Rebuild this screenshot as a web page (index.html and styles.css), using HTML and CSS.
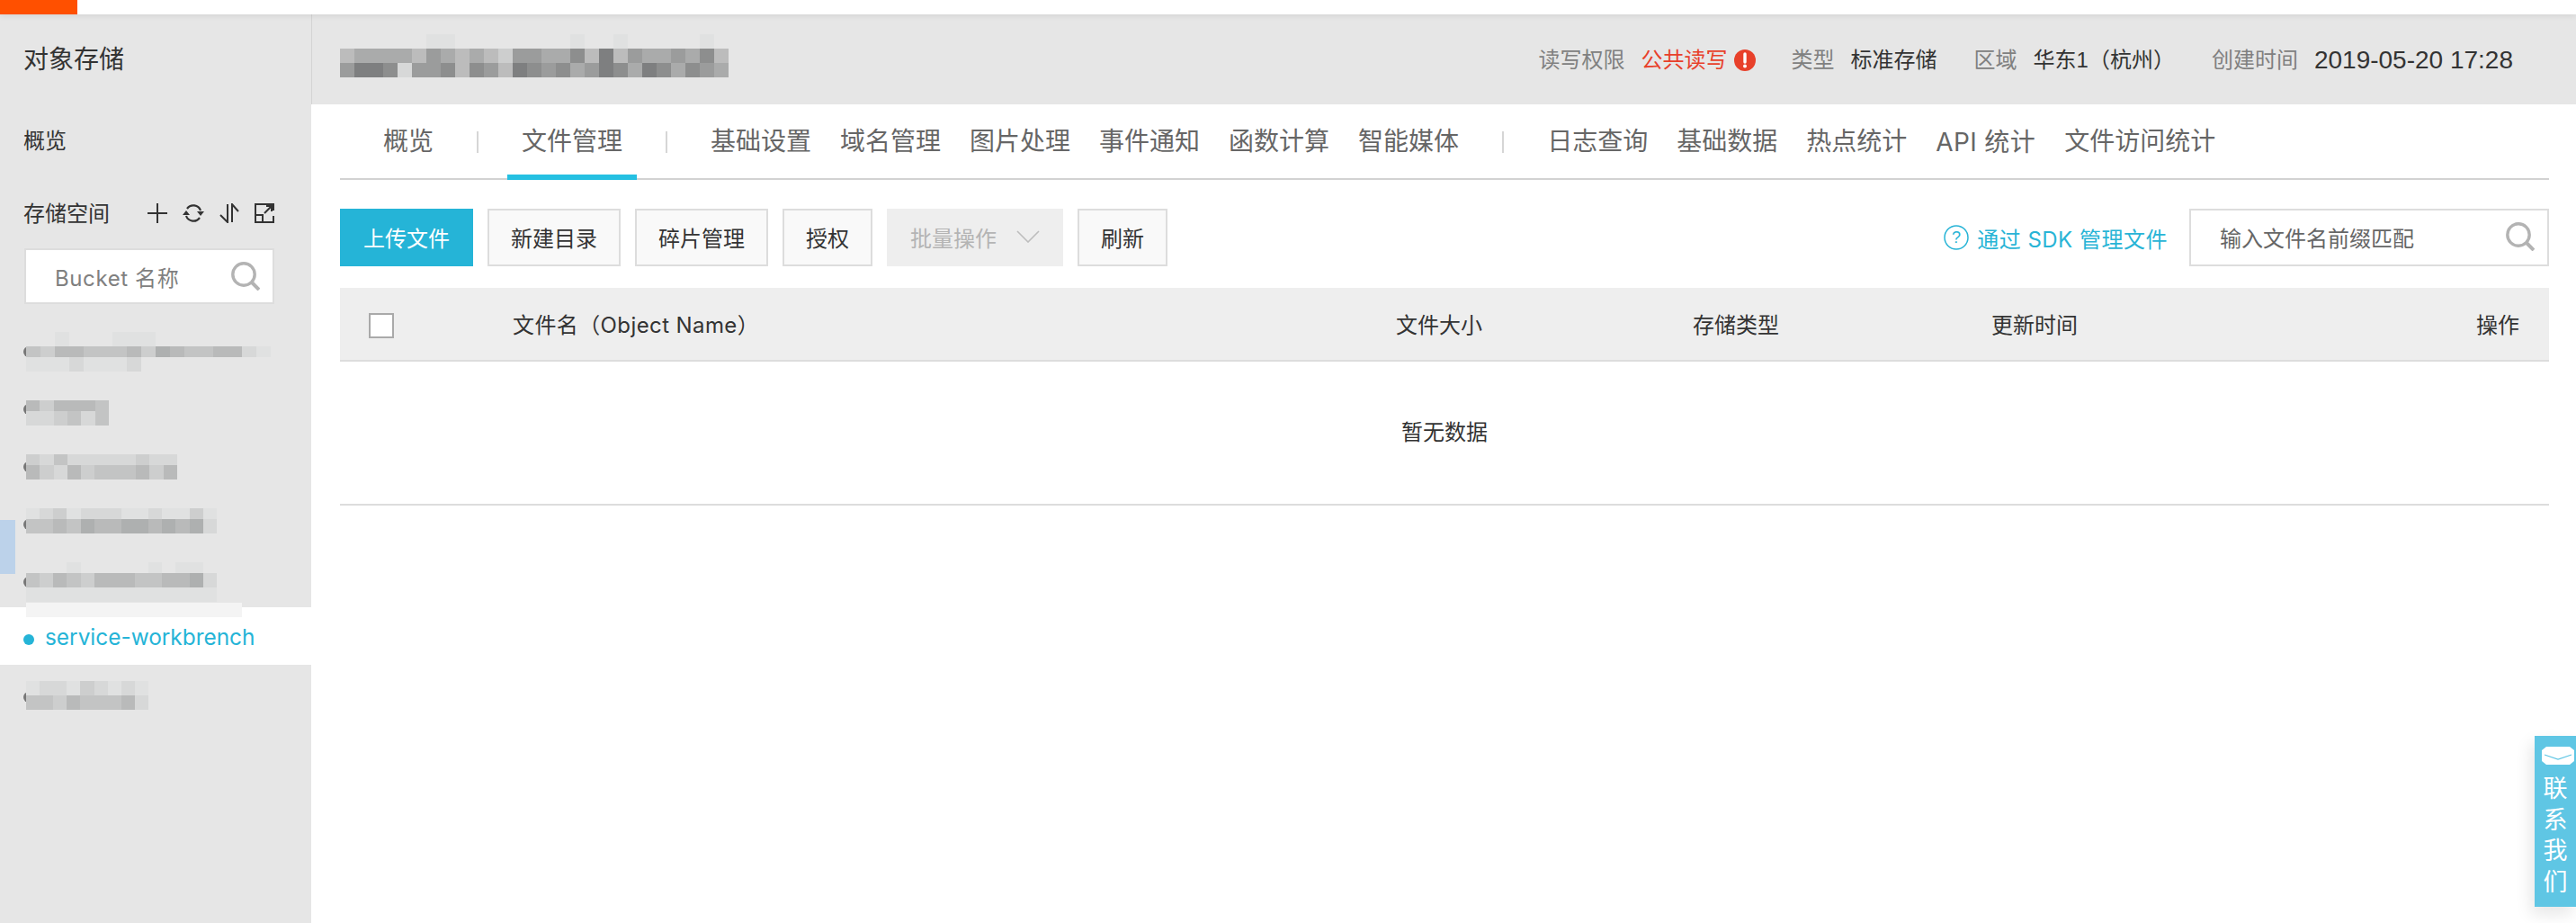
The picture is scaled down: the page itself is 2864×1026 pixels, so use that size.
FILE: index.html
```html
<!DOCTYPE html>
<html lang="zh-CN">
<head>
<meta charset="utf-8">
<title>对象存储</title>
<link rel="stylesheet" href="styles.css">
</head>
<body>
<div class="topbar"><div class="logo"></div></div>
<div class="app">
  <aside class="sidebar">
    <div class="side-title">对象存储</div>
    <div class="side-link">概览</div>
    <div class="side-head">
      <span class="side-head-label">存储空间</span>
      <div class="side-icons">
        <svg class="ico" viewBox="0 0 22 22"><path d="M0 11H22M11 0V22" fill="none" stroke="#333" stroke-width="2"/></svg>
        <svg class="ico" viewBox="0 0 24 22"><path d="M5 6A8.5 8.5 0 0 1 20 8M19 16A8.5 8.5 0 0 1 4 14" fill="none" stroke="#333" stroke-width="2.2"/><path d="M0 13H8L4 8ZM24 9H16L20 14Z" fill="#333"/></svg>
        <svg class="ico" viewBox="0 0 22 22"><path d="M9 1V21L1 13M14 21V1L21 9" fill="none" stroke="#333" stroke-width="2"/></svg>
        <svg class="ico" viewBox="0 0 22 22"><path d="M21 8V1H1V21H21V14M1 13H9V21M11 11L19 3M13 3H19V9" fill="none" stroke="#333" stroke-width="2"/></svg>
      </div>
    </div>
    <div class="side-search">
      <span class="lat bucket-ph">Bucket 名称</span>
      <svg class="search-ico" viewBox="0 0 32 32"><circle cx="14" cy="14" r="12.2" fill="none" stroke="#b3b3b3" stroke-width="3.4"/><path d="M22.5 22.5L31 31" stroke="#b3b3b3" stroke-width="4"/></svg>
    </div>
    <ul class="bucket-list">
      <li class="bucket"><div class="mosaic m-a">
        <i></i><i></i><i class="s1"></i><i></i><i></i><i></i><i class="s1"></i><i class="s1"></i><i class="s1"></i><i></i><i></i><i></i><i></i><i></i><i></i><i></i><i></i>
        <i class="s4"></i><i class="s3"></i><i class="s5"></i><i class="s5"></i><i class="s4"></i><i class="s4"></i><i class="s4"></i><i class="s5"></i><i class="s3"></i><i class="s6"></i><i class="s5"></i><i class="s4"></i><i class="s4"></i><i class="s5"></i><i class="s5"></i><i class="s2"></i><i class="s1"></i>
        <i class="s1"></i><i class="s1"></i><i class="s1"></i><i class="s2"></i><i class="s1"></i><i class="s1"></i><i class="s1"></i><i class="s2"></i><i></i><i></i><i></i><i></i><i></i><i></i><i></i><i></i><i></i>
      </div></li>
      <li class="bucket"><div class="mosaic m-b">
        <i class="s5"></i><i class="s3"></i><i class="s5"></i><i class="s5"></i><i class="s5"></i><i class="s4"></i>
        <i class="s2"></i><i class="s2"></i><i class="s3"></i><i class="s4"></i><i class="s2"></i><i class="s4"></i>
      </div></li>
      <li class="bucket"><div class="mosaic m-c">
        <i class="s3"></i><i class="s2"></i><i class="s4"></i><i class="s2"></i><i class="s2"></i><i class="s2"></i><i class="s2"></i><i class="s2"></i><i class="s3"></i><i class="s2"></i><i class="s2"></i>
        <i class="s5"></i><i class="s3"></i><i class="s2"></i><i class="s5"></i><i class="s3"></i><i class="s4"></i><i class="s4"></i><i class="s4"></i><i class="s5"></i><i class="s3"></i><i class="s5"></i>
      </div></li>
      <li class="bucket"><div class="mosaic m-d">
        <i class="s1"></i><i class="s2"></i><i class="s3"></i><i class="s1"></i><i class="s2"></i><i class="s2"></i><i class="s2"></i><i class="s1"></i><i class="s1"></i><i class="s2"></i><i class="s1"></i><i class="s1"></i><i class="s3"></i><i class="s1"></i>
        <i class="s4"></i><i class="s4"></i><i class="s5"></i><i class="s4"></i><i class="s6"></i><i class="s5"></i><i class="s5"></i><i class="s6"></i><i class="s6"></i><i class="s5"></i><i class="s6"></i><i class="s5"></i><i class="s6"></i><i class="s2"></i>
      </div></li>
      <li class="bucket"><div class="mosaic m-e">
        <i></i><i></i><i></i><i class="s1"></i><i></i><i></i><i></i><i></i><i></i><i class="s1"></i><i></i><i class="s1"></i><i class="s1"></i><i></i>
        <i class="s4"></i><i class="s3"></i><i class="s5"></i><i class="s4"></i><i class="s3"></i><i class="s5"></i><i class="s5"></i><i class="s5"></i><i class="s4"></i><i class="s4"></i><i class="s5"></i><i class="s5"></i><i class="s6"></i><i class="s2"></i>
        <i class="s1"></i><i class="s1"></i><i class="s1"></i><i class="s1"></i><i class="s1"></i><i class="s1"></i><i class="s1"></i><i class="s1"></i><i class="s1"></i><i class="s1"></i><i class="s1"></i><i class="s1"></i><i class="s1"></i><i class="s1"></i>
      </div></li>
      <li class="bucket active"><span class="active-name">service-workbrench</span></li>
      <li class="bucket"><div class="mosaic m-f">
        <i class="s1"></i><i class="s2"></i><i class="s2"></i><i class="s1"></i><i class="s3"></i><i class="s2"></i><i class="s1"></i><i class="s2"></i><i class="s1"></i>
        <i class="s4"></i><i class="s4"></i><i class="s3"></i><i class="s5"></i><i class="s4"></i><i class="s4"></i><i class="s4"></i><i class="s5"></i><i class="s2"></i>
      </div></li>
    </ul>
    <div class="blue-tab"></div>
    <div class="strip"></div>
  </aside>

  <main class="main">
    <header class="head">
      <div class="mosaic m-head">
        <i></i><i></i><i></i><i></i><i></i><i></i><i class="s1"></i><i class="s1"></i><i></i><i></i><i></i><i></i><i></i><i></i><i></i><i></i><i class="s1"></i><i></i><i></i><i class="s1"></i><i></i><i></i><i></i><i></i><i></i><i class="s1"></i><i></i>
        <i class="h1"></i><i class="h2"></i><i class="h2"></i><i class="h2"></i><i class="h2"></i><i class="h1"></i><i class="h3"></i><i class="h2"></i><i class="h1"></i><i class="h2"></i><i class="h1"></i><i class="s3"></i><i class="h3"></i><i class="h3"></i><i class="h2"></i><i class="h2"></i><i class="h4"></i><i class="h1"></i><i class="h5"></i><i class="h1"></i><i class="h3"></i><i class="h2"></i><i class="h2"></i><i class="h3"></i><i class="h2"></i><i class="h4"></i><i class="h1"></i>
        <i class="h3"></i><i class="h5"></i><i class="h5"></i><i class="h4"></i><i class="s2"></i><i class="h3"></i><i class="h3"></i><i class="h4"></i><i class="h1"></i><i class="h4"></i><i class="h3"></i><i class="h1"></i><i class="h5"></i><i class="h4"></i><i class="h3"></i><i class="h4"></i><i class="h2"></i><i class="h3"></i><i class="h5"></i><i class="h4"></i><i class="h2"></i><i class="h5"></i><i class="h4"></i><i class="h2"></i><i class="h4"></i><i class="h3"></i><i class="h2"></i>
      </div>
      <dl class="info">
        <dt class="info-key">读写权限</dt>
        <dd class="info-alert">公共读写
          <svg class="alert-ico" viewBox="0 0 24 24"><circle cx="12" cy="12" r="12" fill="#e8402a"/><path d="M12 5V14" stroke="#fff" stroke-width="3.4" stroke-linecap="round"/><circle cx="12" cy="18.5" r="2" fill="#fff"/></svg>
        </dd>
        <dt class="info-key">类型</dt>
        <dd class="info-val">标准存储</dd>
        <dt class="info-key">区域</dt>
        <dd class="info-val">华东1（杭州）</dd>
        <dt class="info-key">创建时间</dt>
        <dd class="info-date">2019-05-20 17:28</dd>
      </dl>
    </header>

    <div class="content">
      <nav class="tabs">
        <a class="tab">概览</a>
        <span class="tab-sep"></span>
        <a class="tab tab-on">文件管理</a>
        <span class="tab-sep"></span>
        <a class="tab">基础设置</a>
        <a class="tab">域名管理</a>
        <a class="tab">图片处理</a>
        <a class="tab">事件通知</a>
        <a class="tab">函数计算</a>
        <a class="tab">智能媒体</a>
        <span class="tab-sep"></span>
        <a class="tab">日志查询</a>
        <a class="tab">基础数据</a>
        <a class="tab">热点统计</a>
        <a class="tab lat tab-api">API 统计</a>
        <a class="tab">文件访问统计</a>
      </nav>

      <div class="toolbar">
        <button class="btn btn-primary">上传文件</button>
        <button class="btn">新建目录</button>
        <button class="btn">碎片管理</button>
        <button class="btn">授权</button>
        <button class="btn btn-disabled">批量操作
          <svg class="chev" viewBox="0 0 26 14"><path d="M1 1L13 13L25 1" fill="none" stroke="#bdbdbd" stroke-width="1.6"/></svg>
        </button>
        <button class="btn">刷新</button>
        <a class="sdk-link lat">
          <svg class="help-ico" viewBox="0 0 28 28"><circle cx="14" cy="14" r="13" fill="none" stroke="#28b4d6" stroke-width="1.5"/><text x="14" y="20" text-anchor="middle" class="help-q">?</text></svg>
          <span class="sdk-text">通过 SDK 管理文件</span>
        </a>
        <div class="file-search">
          <span>输入文件名前缀匹配</span>
          <svg class="search-ico" viewBox="0 0 32 32"><circle cx="14" cy="14" r="12.2" fill="none" stroke="#b3b3b3" stroke-width="3.4"/><path d="M22.5 22.5L31 31" stroke="#b3b3b3" stroke-width="4"/></svg>
        </div>
      </div>

      <div class="table-head">
        <div class="cell-check"><span class="checkbox"></span></div>
        <div class="lat cell-name">文件名（Object Name）</div>
        <div>文件大小</div>
        <div>存储类型</div>
        <div>更新时间</div>
        <div>操作</div>
      </div>
      <div class="table-empty">暂无数据</div>
    </div>
  </main>
</div>
<div class="contact">
  <svg class="contact-ico" viewBox="0 0 36 20"><path d="M5 0H31L36 4V16L31 20H5L0 16V4Z" fill="#fff"/><path d="M3 9L18 14L33 9" fill="none" stroke="#5fc6e4" stroke-width="1.2"/></svg>
  <span>联</span><span>系</span><span>我</span><span>们</span>
</div>
</body>
</html>
```

FILE: styles.css
```css
* { box-sizing: border-box; }
html, body { margin: 0; padding: 0; }
body {
  width: 2864px;
  height: 1026px;
  overflow: hidden;
  position: relative;
  background: #fff;
  color: #333;
  font-family: "Liberation Sans", "Noto Sans CJK SC", sans-serif;
  font-size: 24px;
}
.lat { font-family: "Inter", "Noto Sans CJK SC", sans-serif; }
.topbar {
  height: 16px;
  background: #fff;
  position: relative;
  z-index: 2;
  box-shadow: 0 2px 6px rgba(0, 0, 0, .08);
}
.logo { width: 86px; height: 16px; background: #ff5000; }
.app { display: flex; height: 1010px; }

/* sidebar */
.sidebar {
  width: 346px;
  flex: none;
  background: #e6e6e6;
  position: relative;
}
.side-title {
  height: 100px;
  padding-left: 26px;
  line-height: 101px;
  font-size: 28px;
}
.side-link {
  height: 82px;
  padding-left: 26px;
  line-height: 82px;
}
.side-head {
  display: flex;
  align-items: center;
  height: 78px;
  padding: 0 41px 0 26px;
  justify-content: space-between;
}
.side-head-label { padding-bottom: 3px; }
.side-icons { display: flex; align-items: center; gap: 17px; }
.ico { width: 22px; height: 22px; display: block; }
.ico:nth-child(2) { width: 24px; }
.side-search {
  margin: 0 41px 0 27px;
  height: 62px;
  border: 2px solid #ddd;
  background: #fff;
  display: flex;
  align-items: center;
  justify-content: space-between;
  padding: 0 14px 0 32px;
  color: #808080;
}
.bucket-ph { letter-spacing: .6px; }
.search-ico { width: 32px; height: 32px; display: block; }
.bucket-list { list-style: none; margin: 17px 0 0; padding: 0; }
.bucket { height: 64px; position: relative; }
.bucket::before {
  content: "";
  position: absolute;
  left: 26px;
  top: 30px;
  width: 12px;
  height: 12px;
  border-radius: 50%;
  background: #777;
}
.bucket.active { background: #fff; display: flex; padding: 0 0 0 50px; }
.bucket.active::before { background: #25b4d7; }
.active-name { color: #25b4d7; font-size: 24.4px; line-height: 66px; font-family: "Inter", sans-serif; }

.mosaic {
  position: absolute;
  display: grid;
  grid-auto-columns: 16px;
}
.mosaic i { display: block; }
.m-a { left: 29px; top: 14px; grid-template-columns: repeat(17, 16px); grid-template-rows: 16px 12px 16px; }
.m-b { left: 29px; top: 26px; grid-template-columns: repeat(6, 15.33px); grid-template-rows: 12px 16px; }
.m-c { left: 29px; top: 22px; grid-template-columns: repeat(11, 15.27px); grid-template-rows: 12px 16px; }
.m-d { left: 29px; top: 18px; grid-template-columns: repeat(14, 15.14px); grid-template-rows: 12px 16px; }
.m-e { left: 29px; top: 14px; grid-template-columns: repeat(14, 15.14px); grid-template-rows: 12px 16px 16px; }
.m-f { left: 29px; top: 18px; grid-template-columns: repeat(9, 15.11px); grid-template-rows: 16px 16px; }
.m-head {
  position: static;
  grid-template-columns: repeat(27, 16px);
  grid-template-rows: 16px 16px 16px;
  margin-bottom: 8px;
}
.s1 { background: #e0e1e1; }
.s2 { background: #d7d8d8; }
.s3 { background: #cdcece; }
.s4 { background: #c3c4c4; }
.s5 { background: #b9baba; }
.s6 { background: #aeb0b0; }
.h1 { background: #bcbcbc; }
.h2 { background: #aaabab; }
.h3 { background: #9b9c9c; }
.h4 { background: #8d8e8e; }
.h5 { background: #7e7f80; }

.blue-tab {
  position: absolute;
  left: 0;
  top: 562px;
  width: 17px;
  height: 60px;
  background: #bcd2ea;
}
.strip {
  position: absolute;
  left: 29px;
  top: 654px;
  width: 240px;
  height: 16px;
  background: #f4f4f4;
}

/* main */
.main { flex: 1; min-width: 0; display: flex; flex-direction: column; }
.head {
  height: 100px;
  background: #e6e6e6;
  border-left: 2px solid #d4d4d4;
  margin-left: -1px;
  padding: 0 70px 0 31px;
  display: flex;
  align-items: center;
  justify-content: space-between;
}
.info { display: flex; align-items: center; margin: 0; line-height: 34px; padding-top: 2px; }
.info dt, .info dd { margin: 0; }
.info-key { color: #808080; margin-right: 18px !important; }
.info-alert { color: #e8402a; display: flex; align-items: center; gap: 7px; margin-right: 40px !important; }
.info-val { color: #333; margin-right: 41px !important; }
.info-date { color: #333; font-size: 28px; }
.alert-ico { width: 24px; height: 24px; display: block; }

.content { padding: 0 30px 0 32px; }
.tabs {
  height: 84px;
  border-bottom: 2px solid #d2d2d2;
  display: flex;
  align-items: stretch;
  padding-left: 32px;
}
.tab {
  padding: 0 16px;
  font-size: 28px;
  line-height: 84px;
  height: 84px;
  color: #666;
}
.tab-api { letter-spacing: .4px; }
.tab-on { border-bottom: 6px solid #25c0e2; }
.tab-sep {
  width: 2px;
  height: 24px;
  margin: 30px 32px 0;
  background: #d6d6d6;
}

.toolbar {
  display: flex;
  align-items: center;
  gap: 16px;
  margin-top: 32px;
  height: 64px;
}
.btn {
  height: 64px;
  border: 2px solid #ddd;
  background: #f9f9f9;
  color: #333;
  padding: 0 24px 2px;
  font: inherit;
  display: flex;
  align-items: center;
}
.btn-primary { background: #25b4d7; border-color: #25b4d7; color: #fff; }
.btn-disabled { background: #eee; border-color: #eee; color: #b4b4b4; width: 196px; gap: 22px; }
.chev { width: 26px; height: 14px; display: block; }
.sdk-link {
  margin-left: auto;
  display: flex;
  align-items: center;
  gap: 9px;
  color: #28b4d6;
  margin-right: 8px;
}
.sdk-text { letter-spacing: .5px; }
.help-ico { width: 28px; height: 28px; display: block; }
.help-q { font-size: 18px; fill: #28b4d6; font-family: "Liberation Sans", sans-serif; }
.file-search {
  width: 400px;
  height: 64px;
  border: 2px solid #ddd;
  display: flex;
  align-items: center;
  justify-content: space-between;
  padding: 0 14px 2px 32px;
  color: #666;
}

.table-head {
  margin-top: 24px;
  height: 82px;
  padding: 0 33px 2px 0;
  background: #eee;
  border-bottom: 2px solid #ddd;
  display: grid;
  grid-template-columns: 192px 982px 330px 332px 1fr auto;
  align-items: center;
}
.cell-check { padding: 6px 0 0 32px; display: flex; }
.cell-name { letter-spacing: .4px; }
.checkbox { width: 28px; height: 28px; background: #fff; border: 2px solid #a9a9a9; }
.table-empty {
  height: 160px;
  border-bottom: 2px solid #ddd;
  text-align: center;
  line-height: 158px;
}

.contact {
  position: absolute;
  right: 0;
  top: 818px;
  width: 46px;
  height: 190px;
  background: #5fc6e4;
  box-shadow: -4px 8px 18px rgba(0, 0, 0, .1);
  color: #fff;
  display: flex;
  flex-direction: column;
  align-items: center;
  font-size: 27px;
  line-height: 34.5px;
  padding-top: 12px;
}
.contact-ico { width: 36px; height: 20px; display: block; margin: 0 0 10px 6px; flex: none; }
```
